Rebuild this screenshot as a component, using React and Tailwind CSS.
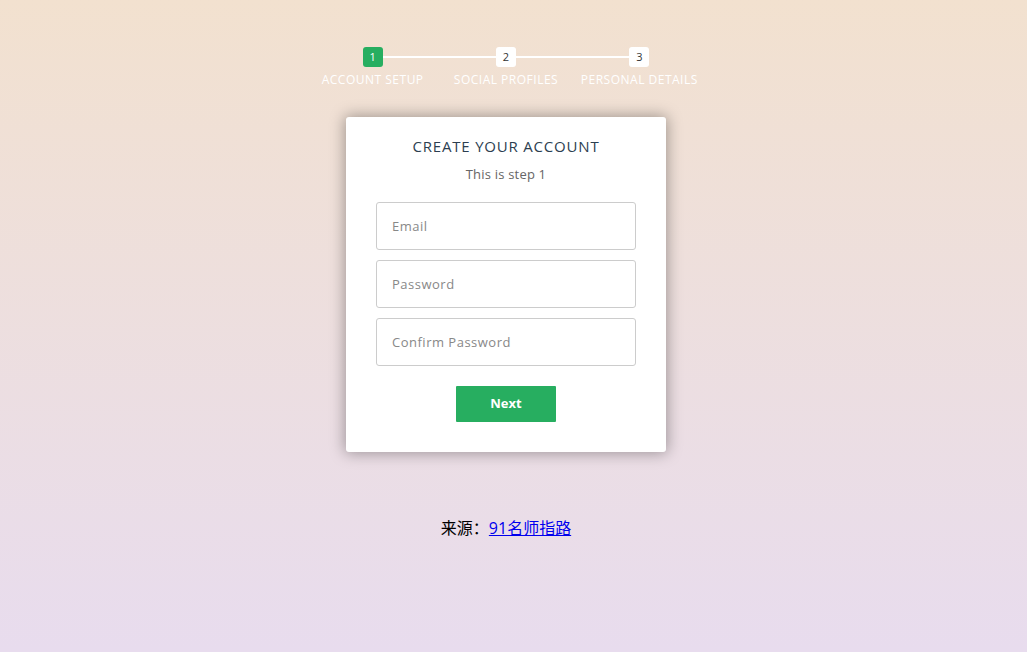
import React from 'react';

const steps = ['Account Setup', 'Social Profiles', 'Personal Details'];

const App = () => {
  return (
    <div
      className="min-h-[652px] w-full bg-gradient-to-b from-[#f2e1cf] to-[#e8dcee] pr-[15px]"
      style={{ fontFamily: '"Open Sans", "Noto Sans CJK SC", sans-serif' }}
    >
      <div className="mx-auto w-[400px] pt-[47px] text-center">
        {/* progress bar */}
        <ul className="flex">
          {steps.map((label, i) => (
            <li key={label} className="relative w-1/3 text-center">
              {i > 0 && (
                <span className="absolute left-[-50%] top-[9px] h-[2px] w-full bg-white" />
              )}
              <span
                className={`relative z-10 mx-auto block h-5 w-5 rounded-[3px] text-[11px] leading-5 ${
                  i === 0 ? 'bg-[#27ae60] text-white' : 'bg-white text-[#333]'
                }`}
              >
                {i + 1}
              </span>
              <span className="mt-[4px] block whitespace-nowrap text-[12px] uppercase tracking-[0.5px] text-white">
                {label}
              </span>
            </li>
          ))}
        </ul>

        {/* card */}
        <div className="mx-auto mt-[28px] w-[320px] rounded-[3px] bg-white px-[30px] pb-[30px] pt-[19px] shadow-[0_0_15px_1px_rgba(0,0,0,0.35)]">
          <h2 className="text-[15px] font-medium uppercase leading-[20px] tracking-[0.8px] text-[#2c3e50]">Create your account</h2>
          <h3 className="mt-[9px] text-[13px] leading-[18px] tracking-[0.2px] text-[#666]">This is step 1</h3>
          <div className="mt-[19px] flex flex-col gap-[10px]">
            {['Email', 'Password', 'Confirm Password'].map((p) => (
              <input
                key={p}
                placeholder={p}
                type="text"
                className="h-[48px] w-full rounded-[3px] border border-[#ccc] px-[15px] text-[13px] tracking-[0.5px] text-[#2c3e50] outline-none placeholder:text-[#888]"
              />
            ))}
          </div>
          <button className="mt-[20px] h-[36px] w-[100px] rounded-[1px] bg-[#27ae60] text-[13px] font-bold text-white">
            Next
          </button>
        </div>

        <p className="mt-[64px] text-[16px] text-black">
          来源：<a href="#" className="text-[#0000ee] underline">91名师指路</a>
        </p>
      </div>
    </div>
  );
};

export default App;
